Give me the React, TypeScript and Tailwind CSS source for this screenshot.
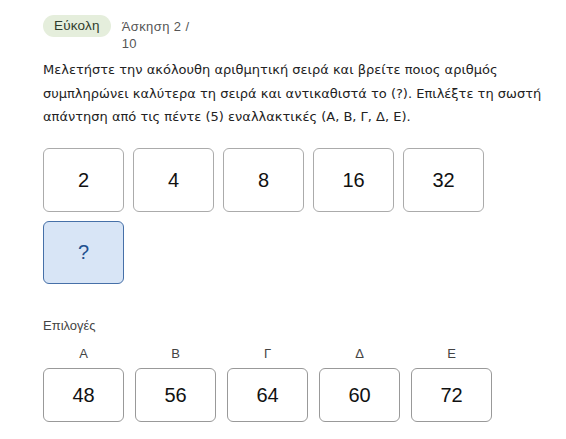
import React from 'react';

const series = ['2', '4', '8', '16', '32'];

const options = [
  { label: 'Α', value: '48' },
  { label: 'Β', value: '56' },
  { label: 'Γ', value: '64' },
  { label: 'Δ', value: '60' },
  { label: 'Ε', value: '72' },
];

export default function App() {
  return (
    <div className="min-h-screen bg-white pl-[43px] pr-[16px] pt-[15px] text-[#222] [font-family:'Liberation_Sans',Arial,sans-serif]">
      {/* Header */}
      <div className="flex items-start gap-[11px]">
        <span className="flex h-[22px] items-center rounded-full bg-[#e5eedc] px-[11px] text-[13.5px] tracking-[0.2px] text-[#2f3b2c]">
          Εύκολη
        </span>
        <span className="mt-[3px] w-[80px] text-[13px] leading-[17px] tracking-[0.4px] text-[#555]">
          Άσκηση 2 / 10
        </span>
      </div>

      {/* Question */}
      <p className="mt-[6px] w-[505px] text-[13px] leading-[23.5px] text-[#222] [font-family:'DejaVu_Sans',sans-serif]">
        Μελετήστε την ακόλουθη αριθμητική σειρά και βρείτε ποιος αριθμός συμπληρώνει καλύτερα τη σειρά και
        αντικαθιστά το (?). Επιλέξτε τη σωστή απάντηση από τις πέντε (5) εναλλακτικές (Α, Β, Γ, Δ, Ε).
      </p>

      {/* Series */}
      <div className="mt-[19px] grid w-[441px] grid-cols-5 gap-[9px]">
        {series.map((n) => (
          <div
            key={n}
            className="flex h-[64px] items-center justify-center rounded-[6px] border border-[#ababab] bg-white text-[20px] text-[#111]"
          >
            {n}
          </div>
        ))}
        <div className="flex h-[63px] items-center justify-center rounded-[6px] border border-[#4670a8] bg-[#d8e5f6] text-[20px] text-[#21508f]">
          ?
        </div>
      </div>

      {/* Options */}
      <div className="mt-[32px] text-[13px] text-[#444]">Επιλογές</div>
      <div className="mt-[11px] flex gap-[11px]">
        {options.map((o) => (
          <div key={o.label} className="flex w-[81px] flex-col items-center">
            <span className="text-[13px] leading-[16px] text-[#444]">{o.label}</span>
            <div className="mt-[6px] flex h-[54px] w-[81px] items-center justify-center rounded-[6px] border border-[#999] bg-white text-[20px] text-[#111]">
              {o.value}
            </div>
          </div>
        ))}
      </div>
    </div>
  );
}
